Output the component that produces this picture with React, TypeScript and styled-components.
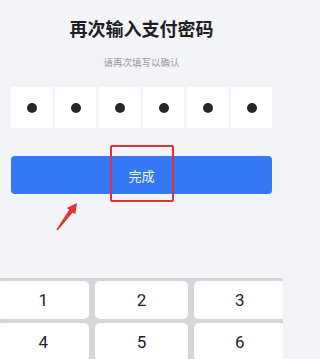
import React from "react";
import styled, { createGlobalStyle } from "styled-components";

const GlobalStyle = createGlobalStyle`
  html, body { margin: 0; padding: 0; }
  body {
    background: #f2f4f7;
    font-family: "Noto Sans CJK SC", "Noto Sans", sans-serif;
    overflow: hidden;
  }
`;

const Page = styled.div`
  position: relative;
  width: 283px;
  height: 359px;
  display: flex;
  flex-direction: column;
  align-items: stretch;
  overflow: hidden;
`;

const Title = styled.h1`
  margin: 16px 0 0;
  font-size: 18px;
  line-height: 24px;
  font-weight: 700;
  color: #1e1e22;
  text-align: center;
`;

const Subtitle = styled.p`
  margin: 15px 0 0;
  font-size: 9.5px;
  line-height: 14px;
  color: #9a9ca1;
  text-align: center;
`;

const Boxes = styled.div`
  margin: 18px 11px 0;
  display: grid;
  grid-template-columns: repeat(6, 1fr);
  gap: 3px;
`;

const Box = styled.div`
  height: 41px;
  background: #ffffff;
  display: flex;
  align-items: center;
  justify-content: center;
`;

const Dot = styled.span`
  width: 10px;
  height: 10px;
  border-radius: 50%;
  background: #25252d;
`;

const ButtonWrap = styled.div`
  position: relative;
  margin: 28px 11px 0;
`;

const DoneButton = styled.button`
  width: 100%;
  height: 38px;
  border: none;
  border-radius: 4px;
  background: #3478f6;
  color: #f4f7ff;
  font-family: inherit;
  font-size: 13px;
  display: flex;
  align-items: center;
  justify-content: center;
  padding: 0;
`;

const Highlight = styled.div`
  position: absolute;
  left: 99px;
  top: -11px;
  width: 64px;
  height: 57px;
  box-sizing: border-box;
  border: 2px solid #de3338;
  border-radius: 2px;
  pointer-events: none;
`;

const Arrow = styled.svg`
  position: absolute;
  left: 54px;
  top: 200px;
  width: 26px;
  height: 33px;
  pointer-events: none;
`;

const Keyboard = styled.div`
  margin-top: auto;
  height: 81px;
  background: #d4d6da;
  padding-top: 3px;
  box-sizing: border-box;
`;

const KeyGrid = styled.div`
  margin: 0 -3px;
  display: grid;
  grid-template-columns: repeat(3, 1fr);
  grid-auto-rows: 38px;
  row-gap: 4px;
  column-gap: 6px;
`;

const Key = styled.div`
  background: #ffffff;
  border-radius: 5px;
  display: flex;
  align-items: center;
  justify-content: center;
  font-family: Roboto, "Noto Sans", sans-serif;
  font-size: 17px;
  color: #222226;
`;

const keys = ["1", "2", "3", "4", "5", "6"];

export default function App() {
  return (
    <>
      <GlobalStyle />
      <Page>
        <Title>再次输入支付密码</Title>
        <Subtitle>请再次填写以确认</Subtitle>
        <Boxes>
          {Array.from({ length: 6 }).map((_, i) => (
            <Box key={i}>
              <Dot />
            </Box>
          ))}
        </Boxes>
        <ButtonWrap>
          <DoneButton>完成</DoneButton>
          <Highlight />
        </ButtonWrap>
        <Arrow viewBox="54 200 26 33">
          <polygon
            points="77,203 75.3,214.3 72.8,212.4 57.5,230.4 56.5,229.6 69.3,209.6 66.7,208"
            fill="#e8322f"
          />
        </Arrow>
        <Keyboard>
          <KeyGrid>
            {keys.map((k) => (
              <Key key={k}>{k}</Key>
            ))}
          </KeyGrid>
        </Keyboard>
      </Page>
    </>
  );
}
